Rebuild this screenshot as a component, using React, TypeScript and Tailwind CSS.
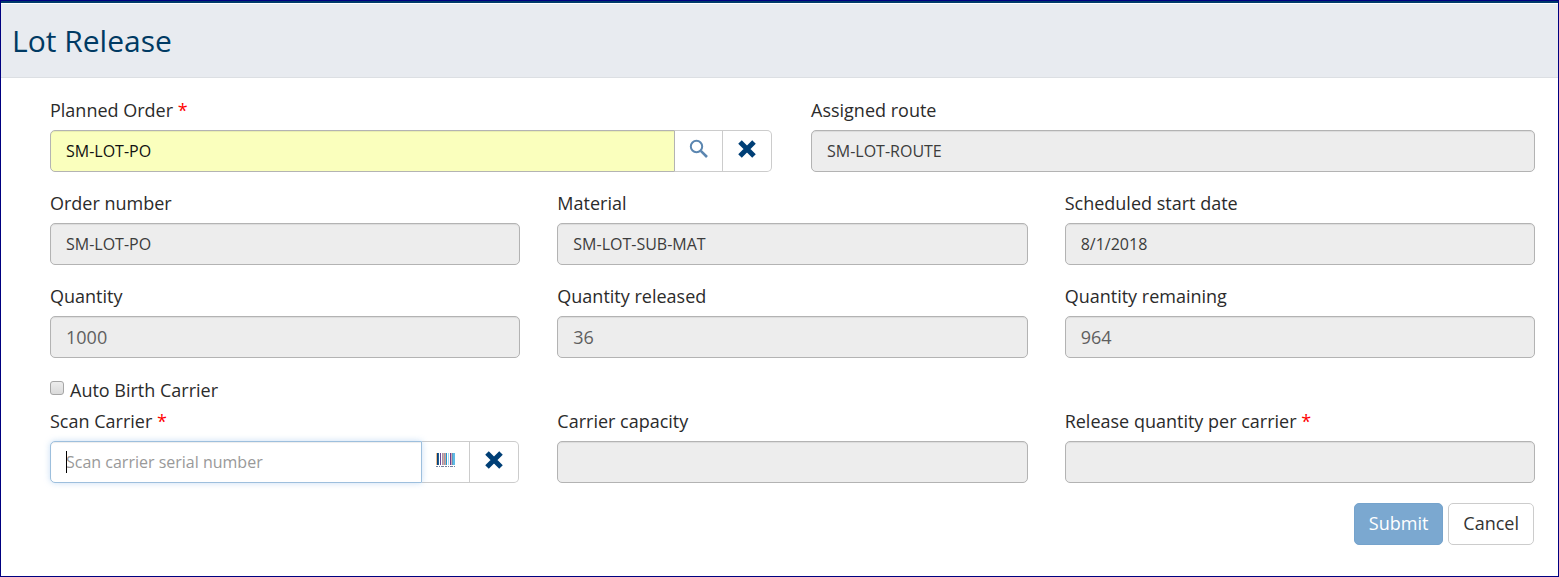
import { useId, type ReactNode } from 'react';

const fieldBase =
  'block h-[42px] w-full min-w-0 border px-[15px] shadow-[inset_0_1px_1px_rgba(0,0,0,0.075)] outline-none';

function Label({ htmlFor, required, children }: { htmlFor: string; required?: boolean; children: ReactNode }) {
  return (
    <label htmlFor={htmlFor} className="mb-2 block text-[18px] leading-6 font-medium text-[#2b2b2b]">
      {children}
      {required && <span className="text-[#f00]"> *</span>}
    </label>
  );
}

function ReadOnlyField({
  label,
  value,
  required,
  numeric,
}: {
  label: string;
  value: string;
  required?: boolean;
  numeric?: boolean;
}) {
  const id = useId();
  return (
    <div className="min-w-0">
      <Label htmlFor={id} required={required}>
        {label}
      </Label>
      <input
        id={id}
        readOnly
        value={value}
        className={`${fieldBase} rounded-[5px] border-[#b3b3b3] bg-[#ededed] ${
          numeric ? 'text-[18px] text-[#5f5f5f]' : 'text-[16px] text-[#3c3c3c]'
        }`}
      />
    </div>
  );
}

function SearchIcon() {
  return (
    <svg width="20" height="20" viewBox="0 0 20 20" fill="none" stroke="#5b86b0" aria-hidden="true">
      <circle cx="7.5" cy="7.5" r="5.7" strokeWidth="2" />
      <path d="M11.8 11.8 L18 18" strokeWidth="2.6" />
    </svg>
  );
}

function ClearIcon() {
  return (
    <svg width="18" height="18" viewBox="0 0 18 18" fill="none" stroke="#003f76" strokeWidth="5" aria-hidden="true">
      <path d="M2 2 L16 16 M16 2 L2 16" />
    </svg>
  );
}

const bars = [
  { x: 0, w: 1, c: '#f0bd8c' },
  { x: 1, w: 1, c: '#0a4076' },
  { x: 2, w: 1, c: '#1d5c94' },
  { x: 4, w: 1, c: '#6b4a9a' },
  { x: 6, w: 1, c: '#a890a8' },
  { x: 7, w: 1, c: '#d9aaa0' },
  { x: 8, w: 1, c: '#8b9fb8' },
  { x: 9, w: 1, c: '#d7a090' },
  { x: 10, w: 1, c: '#1f98d0' },
  { x: 12, w: 1, c: '#a4dcf4' },
  { x: 14, w: 1, c: '#6b3b8d' },
  { x: 15, w: 1, c: '#d4a8b4' },
  { x: 16, w: 1, c: '#5f98bd' },
  { x: 17, w: 2, c: '#5dbbe6' },
];

function BarcodeIcon() {
  return (
    <svg width="19" height="14" viewBox="0 0 19 14" shapeRendering="crispEdges" aria-hidden="true">
      {bars.map((b) => (
        <rect key={b.x} x={b.x} y="0" width={b.w} height="12" fill={b.c} />
      ))}
      <path d="M0 13.5 H19" stroke="#75809c" strokeDasharray="2 1 1 1 3 1" />
    </svg>
  );
}

function AddonButtons({ action, icon, target }: { action: string; icon: ReactNode; target: string }) {
  const base = 'flex h-[42px] shrink-0 items-center justify-center border-y border-r border-[#ccc] bg-white pb-1';
  return (
    <>
      <button type="button" aria-label={action} className={`${base} w-12`}>
        {icon}
      </button>
      <button type="button" aria-label={`Clear ${target}`} className={`${base} w-[49px] rounded-r-[5px]`}>
        <ClearIcon />
      </button>
    </>
  );
}

export default function App() {
  return (
    <div className="min-h-screen border border-[#000080] bg-white font-['Open_Sans','Noto_Sans',sans-serif] text-[#333]">
      <header className="border-t-2 border-b border-t-[#003a6b] border-b-[#dcdfe3] bg-[#e8ebf0]">
        <h1 className="flex h-[74px] items-center border-t border-white px-[11px] text-[30px] leading-10 text-[#003a63]">
          Lot Release
        </h1>
      </header>

      <form className="flex flex-col pt-5 pr-[23px] pb-[31px] pl-[49px]" onSubmit={(e) => e.preventDefault()}>
        <div className="mb-[19px] grid grid-cols-2 gap-x-[37px]">
          <div className="min-w-0 pr-[2px]">
            <Label htmlFor="planned-order" required>
              Planned Order
            </Label>
            <div className="flex">
              <input
                id="planned-order"
                defaultValue="SM-LOT-PO"
                className={`${fieldBase} flex-1 rounded-l-[5px] border-[#b3b3b3] bg-[#faffbd] text-[16px] text-[#111]`}
              />
              <AddonButtons action="Find planned order" icon={<SearchIcon />} target="planned order" />
            </div>
          </div>
          <ReadOnlyField label="Assigned route" value="SM-LOT-ROUTE" />
        </div>

        <div className="mb-5 grid grid-cols-3 gap-x-[37px] gap-y-[19px]">
          <ReadOnlyField label="Order number" value="SM-LOT-PO" />
          <ReadOnlyField label="Material" value="SM-LOT-SUB-MAT" />
          <ReadOnlyField label="Scheduled start date" value="8/1/2018" />
          <ReadOnlyField label="Quantity" value="1000" numeric />
          <ReadOnlyField label="Quantity released" value="36" numeric />
          <ReadOnlyField label="Quantity remaining" value="964" numeric />
        </div>

        <div className="mb-[7px] flex h-6 items-center gap-[6px]">
          <input
            id="auto-birth"
            type="checkbox"
            className="mb-1 size-[14px] appearance-none rounded-[3px] border border-[#a6a6a6] bg-linear-to-b from-[#ededed] to-[#dadada] checked:bg-[#003f76]"
          />
          <label htmlFor="auto-birth" className="text-[18px] leading-6 font-medium text-[#2b2b2b]">
            Auto Birth Carrier
          </label>
        </div>

        <div className="grid grid-cols-3 gap-x-[37px]">
          <div className="min-w-0 pr-px">
            <Label htmlFor="scan-carrier" required>
              Scan Carrier
            </Label>
            <div className="flex">
              <div className="relative min-w-0 flex-1">
                <input
                  id="scan-carrier"
                  placeholder="Scan carrier serial number"
                  className="block h-[42px] w-full rounded-l-[5px] border border-[#9dbfdd] bg-white px-[15px] text-[16px] caret-transparent shadow-[inset_0_1px_1px_rgba(0,0,0,0.075),0_0_6px_rgba(120,175,230,0.4)] outline-none placeholder:text-[#999]"
                />
                <span className="pointer-events-none absolute top-[10px] left-4 h-[22px] w-px bg-black" />
              </div>
              <AddonButtons action="Scan barcode" icon={<BarcodeIcon />} target="carrier" />
            </div>
          </div>
          <ReadOnlyField label="Carrier capacity" value="" />
          <ReadOnlyField label="Release quantity per carrier" value="" required />
        </div>

        <div className="mt-5 flex justify-end gap-[5px] pr-px">
          <button
            type="submit"
            className="h-[42px] rounded-[5px] border border-[#75a3cc] bg-[#7ba8d0] px-[14px] pb-px text-[18px] text-white"
          >
            Submit
          </button>
          <button
            type="button"
            className="h-[42px] rounded-[5px] border border-[#ccc] bg-white px-[14px] pb-px text-[18px]"
          >
            Cancel
          </button>
        </div>
      </form>
    </div>
  );
}
